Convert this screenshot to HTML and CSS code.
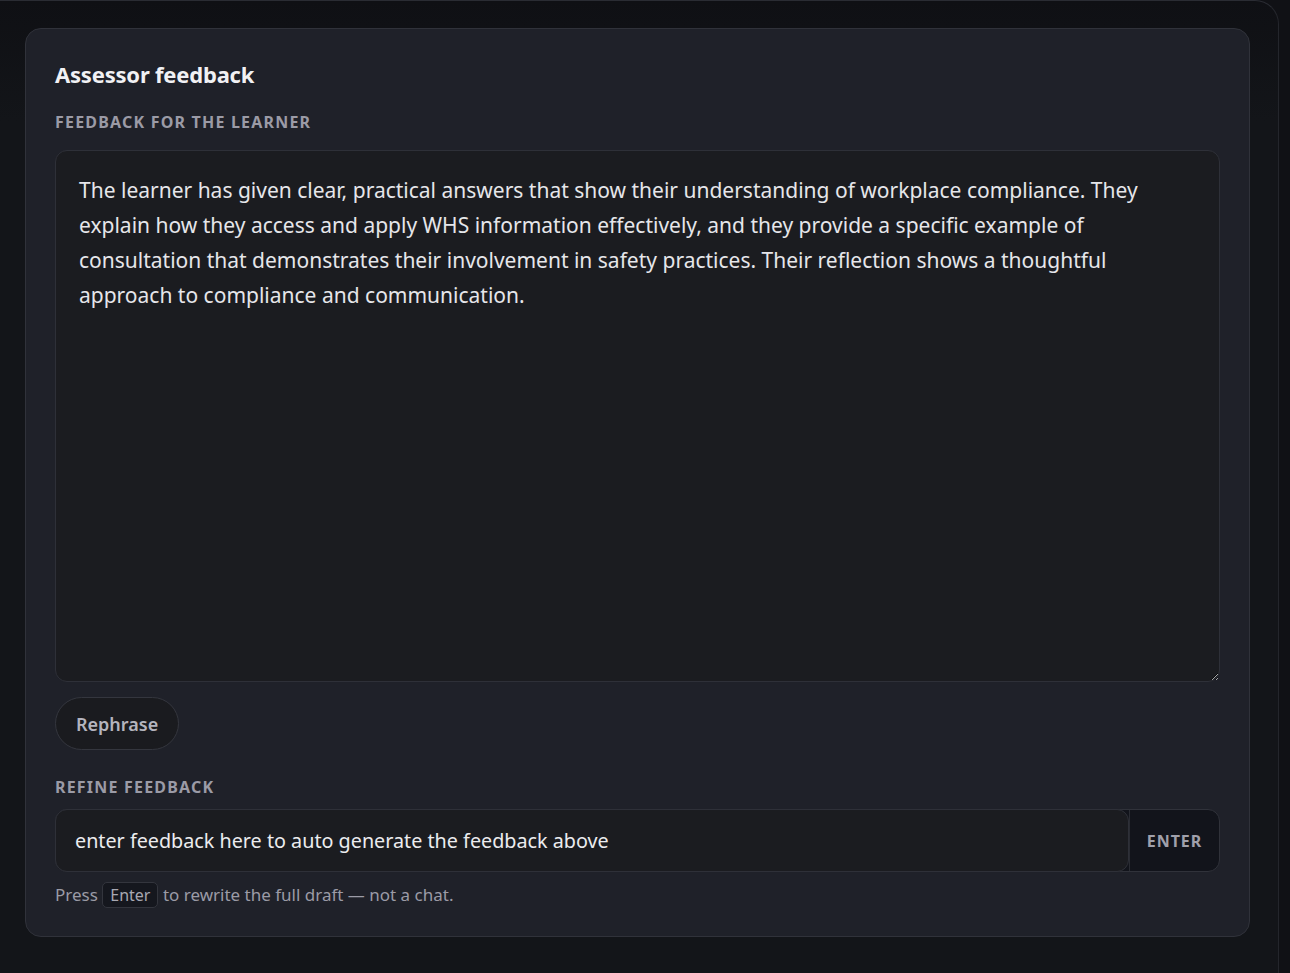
FILE: index.html
```html
<!DOCTYPE html>
<html>
<head>
<meta charset="utf-8">
<title>Assessor feedback</title>
<link rel="stylesheet" href="styles.css">
</head>
<body>
<div class="shell">
  <div class="card">
    <h2 class="title">Assessor feedback</h2>

    <div class="label">Feedback for the learner</div>
    <textarea class="draft">The learner has given clear, practical answers that show their understanding of workplace compliance. They explain how they access and apply WHS information effectively, and they provide a specific example of consultation that demonstrates their involvement in safety practices. Their reflection shows a thoughtful approach to compliance and communication.</textarea>

    <div class="actions">
      <button class="pill">Rephrase</button>
    </div>

    <div class="label">Refine feedback</div>
    <div class="refine">
      <input class="refine-input" type="text" value="enter feedback here to auto generate the feedback above">
      <button class="refine-btn">Enter</button>
    </div>
    <p class="hint">Press <kbd>Enter</kbd> to rewrite the full draft — not a chat.</p>
  </div>
</div>
</body>
</html>
```

FILE: styles.css
```css
html, body{margin:0;padding:0;}
body{background:#101115;font-family:"Noto Sans","Open Sans",Arial,sans-serif;color:#e6e6ea;height:973px;overflow:hidden;}
.shell{margin-left:-30px;width:1309px;height:1000px;box-sizing:border-box;padding:27px 0 0 54px;background:linear-gradient(#0f1014, #131519 120px);border:1px solid #24262c;border-top-color:#2a2c33;border-radius:24px;}
.card{width:1225px;box-sizing:border-box;padding:29px 29px 28px;background:#1f2129;border:1px solid #30323a;border-radius:16px;}
.title{margin:0;font-size:22px;font-weight:700;line-height:32px;color:#f1f1f4;letter-spacing:-0.2px;}
.label{margin-top:22px;font-size:16px;font-weight:700;letter-spacing:1.2px;text-transform:uppercase;color:#9b9ba6;line-height:20px;}
.draft{display:block;margin-top:18px;width:100%;height:532px;box-sizing:border-box;padding:22px 23px;background:#1b1c20;border:1px solid #2e3038;border-radius:12px;color:#e6e6ea;font-family:inherit;font-size:21px;line-height:35px;resize:vertical;outline:none;}
.actions{margin-top:15px;display:flex;}
.pill{height:53px;padding:0 20px;background:#1a1b1f;border:1px solid #34363e;border-radius:27px;color:#b4b4bd;font-family:inherit;font-size:18px;font-weight:600;}
.actions + .label{margin-top:27px;}
.refine{margin-top:12px;display:flex;height:63px;box-sizing:border-box;border:1px solid #30323a;border-radius:12px;background:#12141b;}
.refine-input{flex:1;min-width:0;padding:0 19px;background:#1b1c20;border:1px solid #2e3038;border-radius:12px;margin:-1px 0 -1px -1px;color:#ececef;font-family:inherit;font-size:19.75px;outline:none;}
.refine-btn{width:90px;background:transparent;border:0;border-left:1px solid #2a2c33;color:#a0a0ab;font-family:inherit;font-size:16px;font-weight:700;letter-spacing:1px;text-transform:uppercase;}
.hint{margin:10px 0 0;font-size:17px;color:#9b9ba6;line-height:26px;}
.hint kbd{display:inline-block;padding:0 7px;background:#15171e;border:1px solid #33353d;border-radius:5px;font-family:inherit;font-size:16px;line-height:24px;color:#a8a8b2;}
```
